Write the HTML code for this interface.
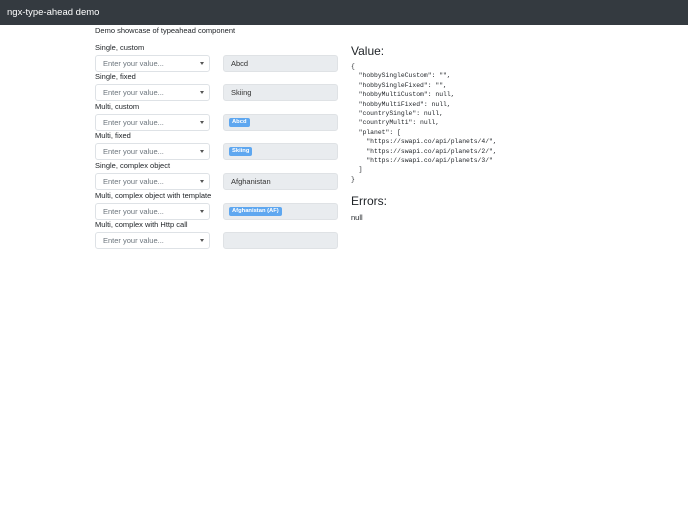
<!DOCTYPE html>
<html><head><style>
*{box-sizing:border-box;margin:0;padding:0}
body{width:688px;height:512px;background:#fff;font-family:"Liberation Sans",sans-serif;color:#212529;position:relative;overflow:hidden}
.nav{position:absolute;left:0;top:0;width:688px;height:25px;background:#343a40;color:#fff;font-size:9.5px;line-height:25px;padding-left:7px}
.t{position:absolute;font-size:7.5px;white-space:nowrap}
.lbl{position:absolute;left:95px;font-size:7.5px;font-weight:500;white-space:nowrap}
.inp{position:absolute;left:95px;width:115px;height:17px;border:1px solid #dee2e6;border-radius:3px;background:#fff;font-size:7.5px;color:#6c757d;line-height:15px;padding-left:7px}
.inp:after{content:"";position:absolute;right:5px;top:6px;border-left:2.5px solid transparent;border-right:2.5px solid transparent;border-top:3px solid #555}
.box{position:absolute;left:223px;width:115px;height:17px;background:#e9ecef;border:1px solid #dfe2e5;border-radius:3px;font-size:7.5px;line-height:15px;padding-left:7px;color:#333}
.tag{display:inline-block;background:#5ea7f0;color:#fff;font-size:5.8px;font-weight:bold;line-height:9px;padding:0 3px;border-radius:2px;vertical-align:middle;margin-left:-2px;margin-top:-2px}
pre{position:absolute;left:351px;top:62px;font-family:"Liberation Mono",monospace;font-size:6.4px;line-height:9.4px;color:#212529}
</style></head><body>
<div class="nav">ngx-type-ahead demo</div>
<div class="t" style="left:95px;top:26px">Demo showcase of typeahead component</div>

<div class="lbl" style="top:43px">Single, custom</div>
<div class="inp" style="top:55px">Enter your value...</div>
<div class="box" style="top:55px">Abcd</div>

<div class="lbl" style="top:72px">Single, fixed</div>
<div class="inp" style="top:84px">Enter your value...</div>
<div class="box" style="top:84px">Skiing</div>

<div class="lbl" style="top:102px">Multi, custom</div>
<div class="inp" style="top:114px">Enter your value...</div>
<div class="box" style="top:114px"><span class="tag">Abcd</span></div>

<div class="lbl" style="top:131px">Multi, fixed</div>
<div class="inp" style="top:143px">Enter your value...</div>
<div class="box" style="top:143px"><span class="tag">Skiing</span></div>

<div class="lbl" style="top:161px">Single, complex object</div>
<div class="inp" style="top:173px">Enter your value...</div>
<div class="box" style="top:173px">Afghanistan</div>

<div class="lbl" style="top:191px">Multi, complex object with template</div>
<div class="inp" style="top:203px">Enter your value...</div>
<div class="box" style="top:203px"><span class="tag">Afghanistan (AF)</span></div>

<div class="lbl" style="top:220px">Multi, complex with Http call</div>
<div class="inp" style="top:232px">Enter your value...</div>
<div class="box" style="top:232px"></div>

<div class="t" style="left:351px;top:44px;font-size:12px">Value:</div>
<pre>{
  "hobbySingleCustom": "",
  "hobbySingleFixed": "",
  "hobbyMultiCustom": null,
  "hobbyMultiFixed": null,
  "countrySingle": null,
  "countryMulti": null,
  "planet": [
    "https://swapi.co/api/planets/4/",
    "https://swapi.co/api/planets/2/",
    "https://swapi.co/api/planets/3/"
  ]
}</pre>
<div class="t" style="left:351px;top:194px;font-size:12px">Errors:</div>
<div class="t" style="left:351px;top:213px">null</div>
</body></html>
